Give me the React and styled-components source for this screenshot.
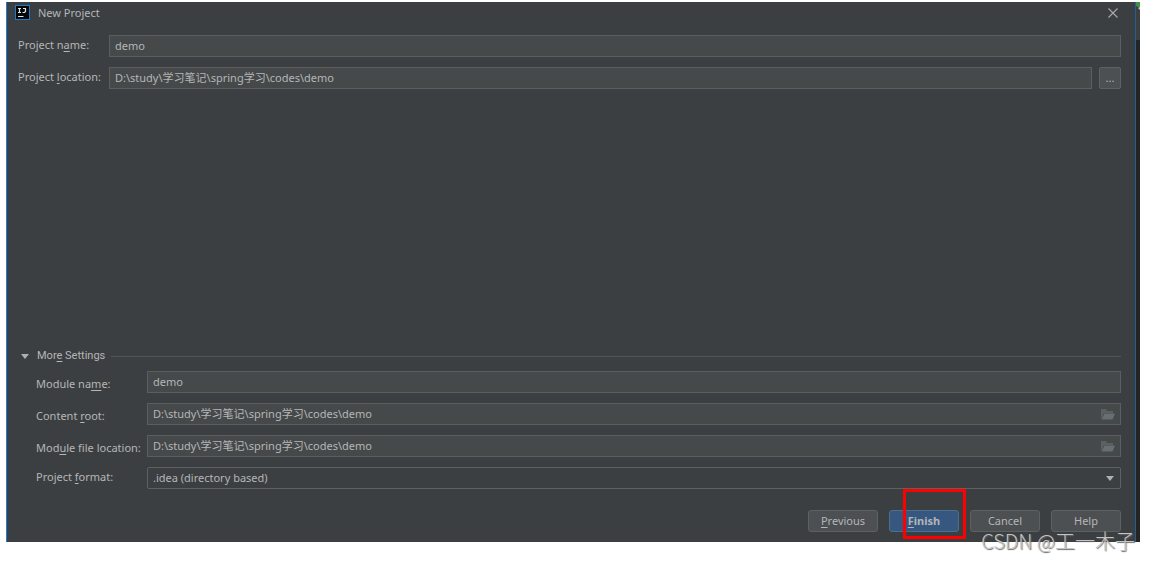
import React, { useState } from 'react'
import styled, { createGlobalStyle } from 'styled-components'

function App() {
  const [name, setName] = useState('demo')
  const [location, setLocation] = useState('D:\\study\\学习笔记\\spring学习\\codes\\demo')
  const [moduleName, setModuleName] = useState('demo')
  const [contentRoot, setContentRoot] = useState('D:\\study\\学习笔记\\spring学习\\codes\\demo')
  const [moduleFile, setModuleFile] = useState('D:\\study\\学习笔记\\spring学习\\codes\\demo')
  const [open, setOpen] = useState(true)

  return (
    <Page>
      <GlobalStyle />
      <Dialog>
        <TitleBar>
          <Logo />
          <Title>New Project</Title>
          <CloseButton aria-label="Close">
            <svg width="10" height="10" viewBox="0 0 10 10">
              <path d="M0.5 0.5L9.5 9.5M9.5 0.5L0.5 9.5" stroke="#a9abac" strokeWidth="1.1" />
            </svg>
          </CloseButton>
        </TitleBar>

        <ProjectForm>
          <Label htmlFor="name">Project n<u>a</u>me:</Label>
          <TextInput id="name" value={name} onChange={(e) => setName(e.target.value)} />
          <Label htmlFor="location">Project <u>l</u>ocation:</Label>
          <Field>
            <TextInput id="location" value={location} onChange={(e) => setLocation(e.target.value)} />
            <BrowseButton aria-label="Browse">...</BrowseButton>
          </Field>
        </ProjectForm>

        <SectionHeader>
          <SectionToggle aria-expanded={open} onClick={() => setOpen(!open)}>
            <Arrow />
            <span>Mor<u>e</u> Settings</span>
          </SectionToggle>
          <Rule />
        </SectionHeader>

        {open && (
          <SettingsForm>
            <Label $low htmlFor="module">Module na<u>m</u>e:</Label>
            <TextInput id="module" value={moduleName} onChange={(e) => setModuleName(e.target.value)} />
            <Label $low htmlFor="root">Content <u>r</u>oot:</Label>
            <Overlay>
              <TextInput id="root" value={contentRoot} onChange={(e) => setContentRoot(e.target.value)} />
              <FolderButton aria-label="Choose content root"><Folder /></FolderButton>
            </Overlay>
            <Label $low htmlFor="file">Mod<u>u</u>le file location:</Label>
            <Overlay>
              <TextInput id="file" value={moduleFile} onChange={(e) => setModuleFile(e.target.value)} />
              <FolderButton aria-label="Choose module file location"><Folder /></FolderButton>
            </Overlay>
            <Label htmlFor="format">Project <u>f</u>ormat:</Label>
            <Overlay>
              <Select id="format" defaultValue="idea">
                <option value="idea">.idea (directory based)</option>
                <option value="ipr">.ipr (file based)</option>
              </Select>
              <SelectArrow><Arrow /></SelectArrow>
            </Overlay>
          </SettingsForm>
        )}

        <Footer>
          <Button><u>P</u>revious</Button>
          <Highlighted>
            <Button $primary><u>F</u>inish</Button>
            <RedFrame />
          </Highlighted>
          <Button>Cancel</Button>
          <Button>Help</Button>
        </Footer>
      </Dialog>
      <Behind>
        <svg width="4" height="12" viewBox="0 0 4 12">
          <path d="M0 0H4V6L0 4Z" fill="#3f9147" />
          <path d="M2 6L4 5V8Z" fill="#c5c8c6" />
        </svg>
      </Behind>
      <Watermark>CSDN @工一木子</Watermark>
    </Page>
  )
}

function Logo() {
  return (
    <svg width="15" height="15" viewBox="0 0 15 15">
      <rect x="0.5" y="0.5" width="14" height="14" fill="#050608" stroke="#1f78c8" />
      <path d="M3 3.5H6M4.5 3.5V7.5M3 7.5H6M8 3.5H11M10.5 3.5V6.5L9.5 7.5H7.5" fill="none" stroke="#e4e6e8" strokeWidth="1.2" />
      <path d="M3 11.5H8.5" stroke="#e4e6e8" />
    </svg>
  )
}

function Arrow() {
  return (
    <svg width="8" height="5" viewBox="0 0 8 5">
      <path d="M0 0H8L4 5Z" fill="#adb0b2" />
    </svg>
  )
}

function Folder() {
  return (
    <svg width="14" height="11" viewBox="0 0 14 11">
      <path d="M0 0H5L6 2H12V4H3L0 10Z" fill="#596164" />
      <path d="M3.5 4.5H14L11.5 10.5H0.5Z" fill="#667074" />
    </svg>
  )
}

export default App

const GlobalStyle = createGlobalStyle`
*{
  box-sizing:border-box;
}
body{
  margin:0;
  background:#fff;
}
body,button,input,select{
  font-family:"Noto Sans","Noto Sans CJK SC",sans-serif;
  font-size:11px;
  line-height:16px;
  color:#b4b6b7;
}
button{
  padding:0;
  border:0;
  background:none;
}
svg{
  display:block;
  flex:none;
}
u{
  text-underline-offset:2px;
}
`

const Page = styled.div`
position:relative;
display:flex;
min-height:100vh;
padding:2px 11px 19px 6px;
`

const Dialog = styled.main`
flex:1;
display:flex;
flex-direction:column;
padding:0 14px 10px 11px;
background:#3c3f41;
border-left:1px solid #1a7fd6;
border-right:1px solid #1f5f96;
`

const Behind = styled.div`
width:4px;
background:linear-gradient(#3c3f41 38px,#222425 38px);
`

const TitleBar = styled.header`
display:flex;
align-items:center;
height:21px;
margin-left:-3px;
`

const Title = styled.h1`
flex:1;
margin:0 0 0 8px;
font-size:11px;
font-weight:400;
`

const CloseButton = styled.button`
padding:3px;
`

const ProjectForm = styled.section`
display:grid;
grid-template-columns:91px 1fr;
row-gap:10px;
align-items:center;
margin-top:12px;
`

const Field = styled.div`
display:flex;
gap:7px;
`

const Label = styled.label`
white-space:nowrap;
padding-top:${({ $low }) => ($low ? '4px' : '0')};
padding-bottom:${({ $low }) => ($low ? '0' : '2px')};
`

const TextInput = styled.input`
display:block;
flex:1;
width:100%;
min-width:0;
height:22px;
padding:0 5px 2px;
background:#45494a;
border:1px solid #5b5e5f;
outline:none;
`

const BrowseButton = styled.button`
width:22px;
height:22px;
background:#4c5052;
border:1px solid #5e6162;
border-radius:2px;
`

const SectionHeader = styled.div`
display:flex;
align-items:center;
gap:6px;
margin-top:auto;
`

const SectionToggle = styled.button`
display:flex;
align-items:center;
gap:8px;
padding-left:3px;
font-family:Roboto,sans-serif;
`

const Rule = styled.hr`
flex:1;
margin:0;
border:0;
border-top:1px solid #515556;
`

const SettingsForm = styled.section`
display:grid;
grid-template-columns:111px 1fr;
row-gap:10px;
align-items:center;
margin:7px 0 0 18px;
`

const Overlay = styled.div`
position:relative;
`

const FolderButton = styled.button`
position:absolute;
top:6px;
right:6px;
`

const Select = styled.select`
display:block;
width:100%;
height:22px;
padding:0 5px;
appearance:none;
background:#3c3f41;
border:1px solid #5e6162;
border-radius:2px;
outline:none;
`

const SelectArrow = styled.span`
position:absolute;
top:9px;
right:7px;
pointer-events:none;
`

const Footer = styled.footer`
display:flex;
justify-content:flex-end;
gap:11px;
margin-top:21px;
`

const Button = styled.button`
width:70px;
height:22px;
background:${({ $primary }) => ($primary ? '#365880' : '#4c5052')};
border:1px solid ${({ $primary }) => ($primary ? '#4c708c' : '#5e6162')};
border-radius:3px;
font-weight:${({ $primary }) => ($primary ? 700 : 400)};
`

const Highlighted = styled.div`
position:relative;
`

const RedFrame = styled.div`
position:absolute;
top:-21px;
left:14px;
width:63px;
height:50px;
border:3px solid #fe0000;
pointer-events:none;
`

const Watermark = styled.div`
position:absolute;
right:16px;
bottom:7px;
font-family:"Noto Sans CJK SC",sans-serif;
font-size:20px;
font-weight:300;
line-height:26px;
color:#c4c4c4;
text-shadow:1px 1px 1px #666;
white-space:nowrap;
`
